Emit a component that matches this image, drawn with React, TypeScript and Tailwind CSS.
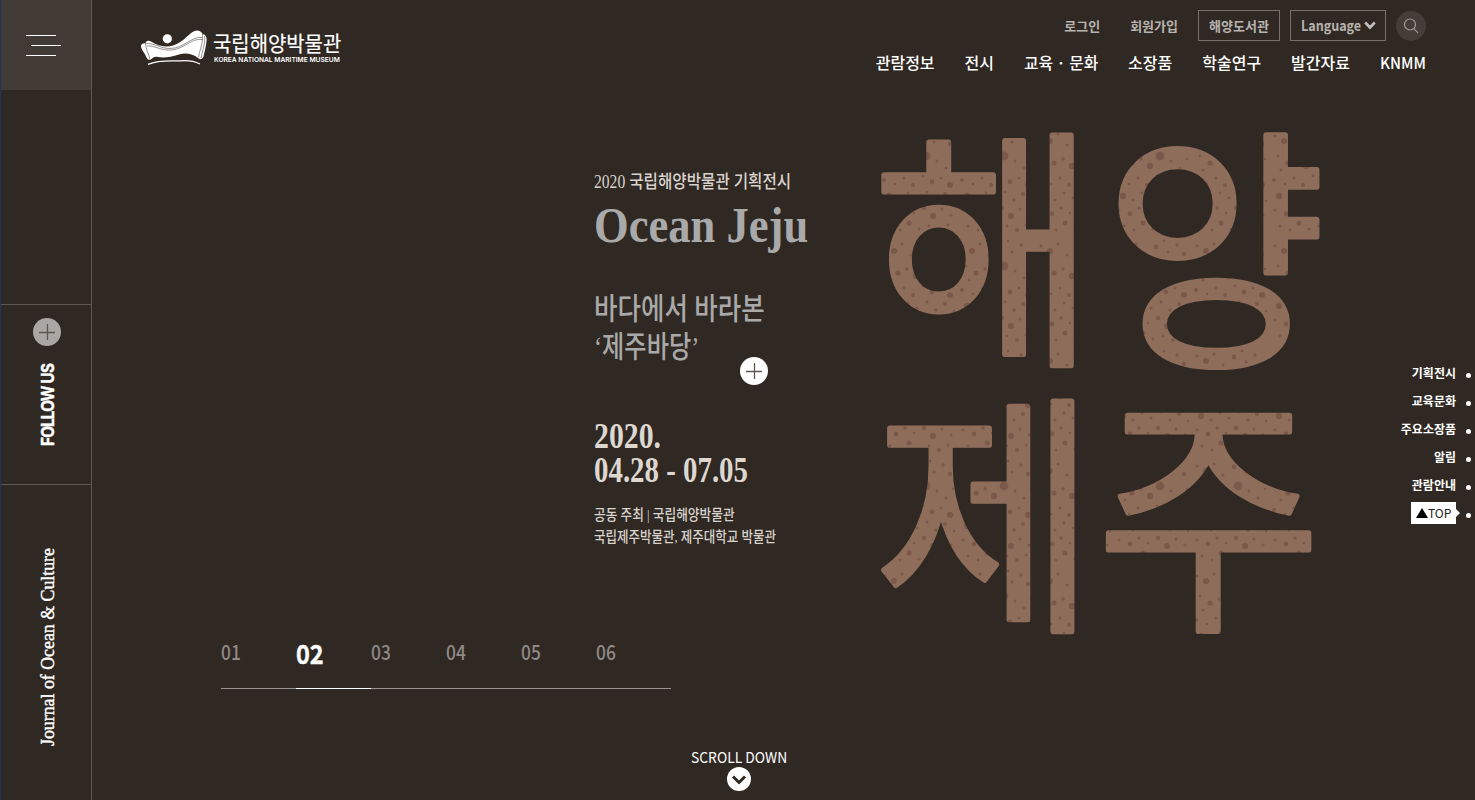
import { useLayoutEffect, useRef, useState, type ReactNode } from 'react';

const SANS = "font-['Noto_Sans_CJK_KR',sans-serif]";
const SERIF = "font-['Liberation_Serif','Noto_Sans_CJK_KR',serif]";

/** One line of text condensed or widened to fill the width of its box. */
function FitText({ className, children }: { className: string; children: ReactNode }) {
  const box = useRef<HTMLDivElement>(null);
  const line = useRef<HTMLSpanElement>(null);
  const [ratio, setRatio] = useState(1);
  useLayoutEffect(() => {
    if (box.current && line.current) setRatio(box.current.offsetWidth / line.current.offsetWidth);
  }, []);
  return (
    <div ref={box} className={className}>
      <span ref={line} className="inline-block origin-left whitespace-nowrap align-top" style={{ transform: `scaleX(${ratio})` }}>
        {children}
      </span>
    </div>
  );
}

function PlusIcon({ className }: { className: string }) {
  return (
    <svg viewBox="0 0 28 28" className={className}>
      <circle cx="14" cy="14" r="14" fill="currentColor" />
      <path d="M6 14.5h16M14.5 6v16" stroke="#5d5752" strokeWidth="1.3" fill="none" />
    </svg>
  );
}

function Sidebar() {
  return (
    <aside className="flex h-full w-[92px] shrink-0 flex-col border-r border-l border-r-[#5f5954] border-l-[#1b356b]">
      <button className="flex h-[90px] w-full flex-col gap-[9px] bg-[#423a34] pt-[35px] pl-[25px]">
        <span className="h-px w-[30px] bg-white" />
        <span className="ml-[5px] h-px w-[30px] bg-white" />
        <span className="h-px w-[30px] bg-white" />
      </button>
      <div className="h-[214px] border-b-0" />
      <div className="flex h-[181px] flex-col items-center border-y border-[#5f5954] pt-[13px] pl-[2px]">
        <PlusIcon className="size-7 text-[#aaa6a3]" />
        <div className="mt-[18px] ml-[2px] flex h-[82px] w-5 items-center justify-center">
          <FitText className="h-5 w-[82px] shrink-0 -rotate-90 font-['Inter',sans-serif] text-[17px] leading-5 font-bold tracking-[-0.05em] text-white [-webkit-text-stroke:0.4px_white]">
            FOLLOW US
          </FitText>
        </div>
      </div>
      <div className="flex grow items-start justify-center pt-[63px] pl-[4px]">
        <div className="flex h-[198px] w-5 items-center justify-center">
          <FitText className={`${SERIF} h-5 w-[198px] shrink-0 -rotate-90 text-[18px] leading-5 text-white [-webkit-text-stroke:0.4px_white]`}>
            Journal of Ocean &amp; Culture
          </FitText>
        </div>
      </div>
    </aside>
  );
}

function Logo() {
  return (
    <a className="flex pt-[29px]">
      <svg viewBox="0 0 68 38" className="mt-px h-[38px] w-[68px]">
        <circle cx="27.3" cy="8.8" r="4.6" fill="#fff" />
        <path
          d="M1 16C1.300 13.500 3.500 12.800 5.500 13.300C6 10.500 8.500 9.800 11.500 11.800C18 16 25 17.500 33 15.500C42 13.200 47 5.500 53 1.800C57 -.7 61 .3 62.500 4C65.500 4.500 67 7 66.600 10.500C66 17 64.500 22 63.500 26.500C62.500 30 59.500 29.500 58 28C53 24 46 22.500 39 24.500C31 27 24 28 18 27C14 26 12.500 28.500 10.500 29.800C8.500 30 7.300 29.500 6.500 27.500C5 23 1 20 1 16Z"
          fill="#fff"
        />
        <path
          d="M5.500 13.500C13 12.500 20 18.500 30 18.500C44 18.500 51 6 62.500 7.500M7 16C14 15 21 21 32 20C45 18.500 51 8 62.500 9.500M62.500 4C63.500 11.500 60 19 58.500 27.500M5.500 13.300C5.500 19 9 24 10 29.500M64.800 6C65.500 14 62 21 61 28.500"
          stroke="#302823"
          strokeWidth=".5"
          fill="none"
        />
        <path d="M8 34.300C20 29.500 32 31.300 41 30.800C48 30.300 55 31.500 60 34" stroke="#fff" strokeWidth="1.300" fill="none" />
      </svg>
      <div className="pl-[5px]">
        <FitText className={`${SANS} h-[27px] w-[128px] text-[21px] leading-[26px] text-white [-webkit-text-stroke:0.2px_white]`}>국립해양박물관</FitText>
        <FitText className="ml-px h-2 w-[126px] font-['Inter',sans-serif] text-[6.800px] leading-2 font-semibold text-white">
          KOREA NATIONAL MARITIME MUSEUM
        </FitText>
      </div>
    </a>
  );
}

function Header() {
  return (
    <header className="flex h-[92px] justify-between pr-[49px] pl-[48px]">
      <Logo />
      <div className="flex flex-col items-end pt-[10px]">
        <div className="flex items-center text-[13px] font-bold text-[#b7b3af]">
          <a className="mr-[30px] leading-[30px]">로그인</a>
          <a className="mr-[20px] leading-[30px]">회원가입</a>
          <a className="mr-[10px] flex h-[31px] w-[82px] items-center justify-center border border-[#77716c]">해양도서관</a>
          <a className="mr-[10px] flex h-[31px] w-[96px] items-center gap-[3px] border border-[#77716c] pl-[10px]">
            <FitText className="w-[60px] text-[14px] leading-[29px]">Language</FitText>
            <svg viewBox="0 0 12 9" className="h-[9px] w-3">
              <path d="M1.200 1.500L6 6.500L10.800 1.500" stroke="#c3bfbc" strokeWidth="2.600" fill="none" />
            </svg>
          </a>
          <a className="flex size-[30px] items-center justify-center rounded-full bg-[#453d38]">
            <svg viewBox="0 0 16 16" className="size-4" fill="none" stroke="#a09b97" strokeWidth="1.200">
              <circle cx="7" cy="6.500" r="5.500" />
              <path d="M10.800 10.600L15 14.800" />
            </svg>
          </a>
        </div>
        <nav className="mt-[9px] flex gap-[30px] text-[16px] leading-6 font-medium text-white">
          <a>관람정보</a>
          <a>전시</a>
          <FitText className="w-[74px]">교육 · 문화</FitText>
          <a>소장품</a>
          <a>학술연구</a>
          <a>발간자료</a>
          <FitText className="w-[46px]">KNMM</FitText>
        </nav>
      </div>
    </header>
  );
}

const SPECKS = [
  [5, 8, 1.5], [14, 13, 3], [22, 6, 1.6], [31, 17, 1.6], [42, 9, 2.4], [50, 3, 1.3], [54, 14, 1.5], [63, 7, 1.7], [70, 16, 2.2],
  [8, 28, 1.4], [18, 35, 2.6], [11, 42, 1.6], [27, 31, 1.7], [36, 38, 3.2], [46, 28, 4.4], [57, 33, 1.5], [66, 40, 1.6], [73, 31, 1.3],
  [4, 52, 2], [15, 56, 1.3], [24, 50, 1.5], [33, 57, 2], [43, 48, 1.4], [52, 54, 2.4], [61, 50, 1.3], [70, 57, 3],
  [9, 68, 3.2], [19, 72, 1.5], [28, 65, 1.4], [37, 70, 1.6], [47, 64, 1.5], [56, 72, 1.7], [65, 66, 2], [74, 73, 1.3],
  [5, 82, 1.5], [16, 86, 2.4], [25, 80, 1.7], [34, 85, 1.3], [44, 80, 2.2], [53, 88, 3], [62, 81, 1.5], [71, 87, 1.6],
  [10, 98, 1.5], [20, 102, 1.4], [29, 95, 2.5], [39, 101, 1.6], [49, 98, 1.4], [59, 102, 2], [68, 97, 1.5],
];

function PosterTitle() {
  return (
    <svg viewBox="0 0 450 520" className="mt-[36px] h-[520px] w-[450px] overflow-visible">
      <defs>
        <pattern id="basalt" width="78" height="110" patternUnits="userSpaceOnUse">
          <rect width="78" height="110" fill="#8f6d5b" />
          {SPECKS.map(([x, y, r], i) => (
            <circle key={i} cx={x} cy={y} r={r} fill="#7b584a" />
          ))}
        </pattern>
      </defs>
      <g
        fill="url(#basalt)"
        stroke="url(#basalt)"
        strokeWidth="5"
        strokeLinejoin="round"
        className="font-['Noto_Sans_CJK_KR',sans-serif] text-[254px] font-normal"
      >
        <text x="-8" y="218" textLength="225" lengthAdjust="spacingAndGlyphs">해</text>
        <text x="225" y="220" textLength="221" lengthAdjust="spacingAndGlyphs" className="text-[258px]">양</text>
        <text x="-6" y="484" textLength="223" lengthAdjust="spacingAndGlyphs">제</text>
        <text x="216" y="484" textLength="226" lengthAdjust="spacingAndGlyphs">주</text>
      </g>
    </svg>
  );
}

function Poster() {
  return (
    <section className="flex h-[548px] pl-[502px]">
      <div className={`${SERIF} relative w-[286px] pt-[80px]`}>
        <FitText className="h-5 w-[197px] text-[18px] leading-5 font-medium text-[#d9d3cd]">2020 국립해양박물관 기획전시</FitText>
        <FitText className="mt-[8px] h-[50px] w-[214px] text-[50px] leading-[50px] font-bold text-[#a9a9a9]">Ocean Jeju</FitText>
        <FitText className="mt-[40px] h-[38px] w-[171px] text-[30px] leading-[38px] font-medium text-[#a9a9a9]">바다에서 바라본</FitText>
        <FitText className="h-[38px] w-[105px] text-[30px] leading-[38px] font-medium text-[#a9a9a9]">‘제주바당’</FitText>
        <FitText className="mt-[53px] h-[34px] w-[67px] text-[36px] leading-[34px] font-bold text-[#ddd7d0]">2020.</FitText>
        <FitText className="h-[34px] w-[154px] text-[36px] leading-[34px] font-bold text-[#ddd7d0]">04.28 - 07.05</FitText>
        <FitText className="mt-[17px] h-[22px] w-[141px] text-[14.500px] leading-[22px] font-medium text-[#d9d3cd]">공동 주최 | 국립해양박물관</FitText>
        <FitText className="h-[22px] w-[182px] text-[14.500px] leading-[22px] font-medium text-[#d9d3cd]">국립제주박물관, 제주대학교 박물관</FitText>
        <PlusIcon className="absolute top-[265px] left-[146px] size-7 text-white" />
      </div>
      <PosterTitle />
    </section>
  );
}

function Pager() {
  return (
    <div className="ml-[129px] flex h-[49px] w-[450px]">
      {['01', '02', '03', '04', '05', '06'].map((n) =>
        n === '02' ? (
          <div key={n} className="w-[75px] border-b border-white">
            <FitText className="w-[28px] text-[26px] leading-[26px] font-bold text-white [-webkit-text-stroke:0.4px_white]">{n}</FitText>
          </div>
        ) : (
          <div key={n} className="w-[75px] border-b border-[#98938f]">
            <FitText className="w-[20px] text-[20px] leading-[24px] font-medium text-[#8f8a86]">{n}</FitText>
          </div>
        ),
      )}
    </div>
  );
}

function ScrollDown() {
  return (
    <div className="mt-[59px] ml-[598px] flex w-[97px] flex-col items-center">
      <FitText className="h-[19px] w-[96px] text-[15px] leading-[18px] text-white">SCROLL DOWN</FitText>
      <svg viewBox="0 0 24 24" className="size-6">
        <circle cx="12" cy="12" r="12" fill="#fff" />
        <path d="M6 9.500L12 15.500L18 9.500" stroke="#302823" strokeWidth="3" fill="none" />
      </svg>
    </div>
  );
}

function QuickNav() {
  return (
    <nav className="absolute top-[359px] right-[4px] flex flex-col text-[12px] font-bold text-white">
      {['기획전시', '교육문화', '주요소장품', '알림', '관람안내'].map((t) => (
        <a key={t} className="flex h-[28px] items-center justify-end leading-[28px]">
          {t}
          <span className="mt-[5px] ml-[10px] size-[5px] rounded-full bg-white" />
        </a>
      ))}
      <a className="flex h-[28px] items-center justify-end font-normal text-[#222]">
        <span className="flex h-[22px] w-[45px] items-center bg-white pl-[5px]">
          <svg viewBox="0 0 12 10" className="h-[10px] w-3">
            <path d="M6 0L12 10H0Z" fill="#000" />
          </svg>
          <FitText className="w-[23px] text-[12px] leading-[22px]">TOP</FitText>
        </span>
        <svg viewBox="0 0 4 8" className="h-2 w-1">
          <path d="M0 0L4 4L0 8Z" fill="#fff" />
        </svg>
        <span className="mt-[5px] ml-[6px] size-[5px] rounded-full bg-white" />
      </a>
    </nav>
  );
}

export default function App() {
  return (
    <div className={`${SANS} relative flex h-[800px] w-[1475px] overflow-hidden bg-[#302823]`}>
      <Sidebar />
      <main className="flex grow flex-col">
        <Header />
        <Poster />
        <Pager />
        <ScrollDown />
      </main>
      <QuickNav />
    </div>
  );
}
